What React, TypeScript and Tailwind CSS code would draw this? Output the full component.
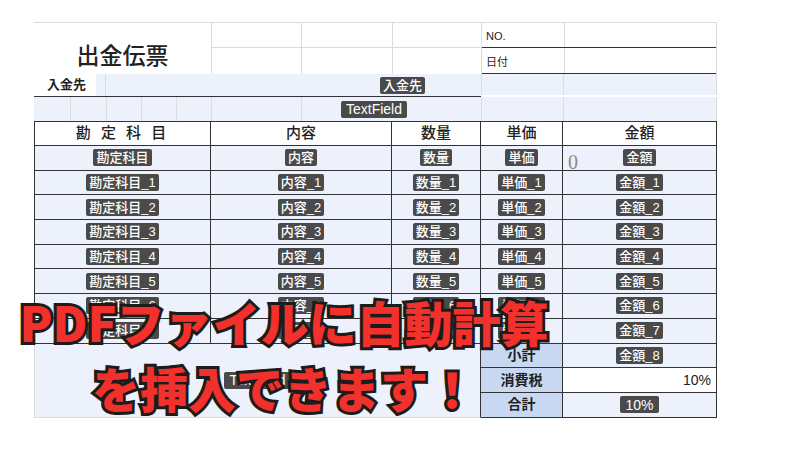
import type { ReactNode } from "react";

const LIGHT = "border-[#dcdcdc]";
const DARK = "border-[#333]";

function Badge({ children, className = "" }: { children: ReactNode; className?: string }) {
  return (
    <span
      className={`inline-flex h-[17px] items-center rounded-[2px] bg-[#4a4a4a] px-[3px] text-[13px] font-medium leading-none text-white ${className}`}
    >
      {children}
    </span>
  );
}

const fields = ["勘定科目", "内容", "数量", "単価", "金額"];

export default function App() {
  const rows = [0, 1, 2, 3, 4, 5, 6, 7];

  return (
    <div className="relative h-[450px] w-[800px] overflow-hidden bg-white pl-[34px] pt-[22px] font-['Liberation_Sans','Noto_Sans_CJK_JP',sans-serif] text-[#222]">
      <div className="w-[683px]">
        {/* header block */}
        <div className={`flex h-[52px] border-t ${LIGHT}`}>
          <div className="flex w-[177px] items-end justify-center pb-[6px] text-[23px] font-medium leading-none">
            出金伝票
          </div>
          <div className="grid w-[270px] grid-cols-[90px_91px_89px] grid-rows-[25px_26px]">
            {[0, 1, 2, 3, 4, 5].map((i) => (
              <div key={i} className={`border-l ${LIGHT} ${i < 3 ? "border-b" : ""}`} />
            ))}
          </div>
          <div className={`flex w-[236px] flex-col border-l border-r ${LIGHT}`}>
            <div className={`flex h-[25px] border-b ${DARK}`}>
              <div className="flex w-[82px] items-end pb-[3px] pl-[4px] text-[11px]">NO.</div>
              <div className={`flex-1 border-l ${LIGHT}`} />
            </div>
            <div className={`flex h-[26px] border-b ${DARK}`}>
              <div className="flex w-[82px] items-end pb-[3px] pl-[4px] text-[11px]">日付</div>
              <div className={`flex-1 border-l ${LIGHT}`} />
            </div>
          </div>
        </div>

        {/* 入金先 row */}
        <div className="flex h-[23px]">
          <div className={`flex w-[447px] border-b ${DARK} bg-[#edf1fb]`}>
            <div className="flex w-[62px] items-center bg-white pl-[13px] text-[13px] font-semibold">入金先</div>
            <div className={`w-[10px] border-r ${LIGHT}`} />
            <div className="flex flex-1 items-center pl-[274px]">
              <Badge>入金先</Badge>
            </div>
          </div>
          <div className={`flex w-[236px] border-b-2 border-white bg-[#edf1fb]`}>
            <div className={`w-[82px] border-l ${LIGHT}`} />
            <div className={`flex-1 border-l border-r ${LIGHT}`} />
          </div>
        </div>

        {/* TextField row */}
        <div className="flex h-[24px] bg-[#edf1fb]">
          {[36, 36, 35, 35, 35].map((w, i) => (
            <div key={i} style={{ width: w }} className={i > 0 ? `border-l ${LIGHT}` : ""} />
          ))}
          <div className={`w-[90px] border-l ${LIGHT}`} />
          <div className={`flex w-[180px] items-center border-l ${LIGHT} pl-[39px]`}>
            <Badge className="px-[5px] text-[14px]">TextField</Badge>
          </div>
          <div className={`w-[82px] border-l ${LIGHT}`} />
          <div className={`w-[154px] border-l border-r ${LIGHT}`} />
        </div>

        {/* table */}
        <div className="grid grid-cols-[177px_181px_89px_82px_154px] grid-rows-[25px_repeat(11,24.7px)]">
          {["勘 定 科 目", "内容", "数量", "単価", "金額"].map((h, i) => (
            <div
              key={h}
              className={`flex items-center justify-center border-t border-r border-b ${DARK} bg-white text-[15px] font-medium ${
                i === 0 ? "border-l tracking-[3px]" : ""
              }`}
            >
              {h}
            </div>
          ))}

          {rows.map((r) =>
            fields.map((f, i) => {
              if (r === 7 && i === 4) return null;
              const label = r === 0 ? f : `${f}_${r}`;
              return (
                <div
                  key={`${r}-${i}`}
                  className={`relative flex items-center justify-center border-r border-b ${DARK} bg-[#edf1fb] ${
                    i === 0 ? "border-l" : ""
                  }`}
                >
                  {r === 0 && i === 4 && (
                    <span className="absolute left-[5px] top-[1px] font-['Liberation_Serif',serif] text-[20px] text-[#8a8a8a]">
                      0
                    </span>
                  )}
                  <Badge>{label}</Badge>
                </div>
              );
            })
          )}
          <div className={`col-start-5 row-start-9 flex items-center justify-center border-r border-b ${DARK} bg-[#edf1fb]`}>
            <Badge>金額_7</Badge>
          </div>

          <div
            className={`col-span-3 col-start-1 row-span-3 row-start-10 flex items-center justify-center border-l border-b ${LIGHT} border-r-[1px] border-r-[#333] bg-[#edf1fb]`}
          >
            <Badge className="px-[5px] text-[14px]">TextField</Badge>
          </div>

          <div className={`col-start-4 row-start-10 flex items-center justify-center border-r border-b ${DARK} bg-[#c8d8f2] text-[14px] font-bold`}>
            小計
          </div>
          <div className={`col-start-5 row-start-10 flex items-center justify-center border-r border-b ${DARK} bg-[#edf1fb]`}>
            <Badge>金額_8</Badge>
          </div>

          <div className={`col-start-4 row-start-11 flex items-center justify-center border-r border-b ${DARK} bg-[#c8d8f2] text-[14px] font-bold`}>
            消費税
          </div>
          <div className={`col-start-5 row-start-11 flex items-center justify-end border-r border-b ${DARK} bg-white pr-[5px] text-[14px]`}>
            10%
          </div>

          <div className={`col-start-4 row-start-12 flex items-center justify-center border-r border-b ${DARK} bg-[#c8d8f2] text-[14px] font-bold`}>
            合計
          </div>
          <div className={`col-start-5 row-start-12 flex items-center justify-center border-r border-b ${DARK} bg-[#edf1fb]`}>
            <Badge className="px-[5px] text-[14px]">10%</Badge>
          </div>
        </div>
      </div>

      {/* caption over the form */}
      <div className="absolute left-0 top-[288px] w-[568px] text-center font-['Noto_Sans_CJK_JP',sans-serif] text-[48px] font-black leading-[66px] text-[#f2302c] [paint-order:stroke_fill] [-webkit-text-stroke:6px_#1c1c1c]">
        <div>PDFファイルに自動計算</div>
        <div>を挿入できます！</div>
      </div>
    </div>
  );
}
